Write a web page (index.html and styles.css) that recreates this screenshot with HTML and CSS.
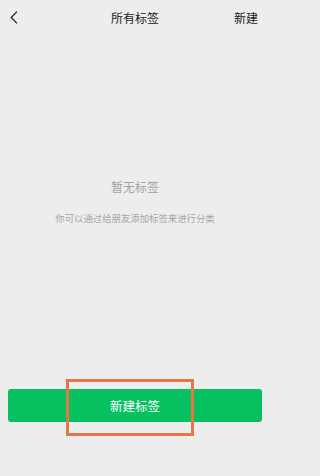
FILE: index.html
```html
<!DOCTYPE html>
<html lang="zh">
<head>
<meta charset="utf-8">
<title>所有标签</title>
<link rel="stylesheet" href="styles.css">
</head>
<body>
<div class="page">
  <header class="nav">
    <span class="back">
      <svg width="8" height="13" viewBox="0 0 8 13"><polyline points="7,0.7 1.2,6.5 7,12.3" fill="none" stroke="#1a1a1a" stroke-width="1.2"/></svg>
    </span>
    <span class="title">所有标签</span>
    <span class="action">新建</span>
  </header>
  <main class="empty">
    <div class="empty-title">暂无标签</div>
    <div class="empty-desc">你可以通过给朋友添加标签来进行分类</div>
  </main>
  <footer class="bottom">
    <button class="btn">新建标签</button>
    <span class="highlight"></span>
  </footer>
</div>
</body>
</html>
```

FILE: styles.css
```css
* { box-sizing: border-box; }
html, body {
  margin: 0;
  padding: 0;
  background: #ededed;
}
body {
  font-family: "Noto Sans CJK SC", "Noto Sans", sans-serif;
  color: #1a1a1a;
}
.page {
  width: 270px;
  height: 476px;
  display: flex;
  flex-direction: column;
}
.nav {
  height: 34px;
  display: flex;
  align-items: center;
  justify-content: space-between;
  padding: 0 12px 0 10px;
  position: relative;
}
.back {
  display: flex;
  width: 8px;
  height: 13px;
}
.title {
  position: absolute;
  left: 0;
  right: 0;
  text-align: center;
  font-size: 12px;
  pointer-events: none;
}
.action {
  font-size: 12px;
}
.empty {
  flex: 1;
  display: flex;
  flex-direction: column;
  align-items: center;
  padding-top: 143px;
}
.empty-title {
  font-size: 12px;
  color: #a3a3a3;
  line-height: 20px;
}
.empty-desc {
  margin-top: 14px;
  font-size: 9.4px;
  color: #a6a6a6;
  line-height: 14px;
}
.bottom {
  position: relative;
  padding: 0 8px 54px;
}
.btn {
  display: block;
  width: 100%;
  height: 33px;
  border: none;
  border-radius: 3px;
  background: #07c160;
  color: #fff;
  font-family: inherit;
  font-size: 12.5px;
  padding: 0;
}
.highlight {
  position: absolute;
  left: 66px;
  top: -10px;
  width: 128px;
  height: 57px;
  border: 3.5px solid #e4764a;
}
```
